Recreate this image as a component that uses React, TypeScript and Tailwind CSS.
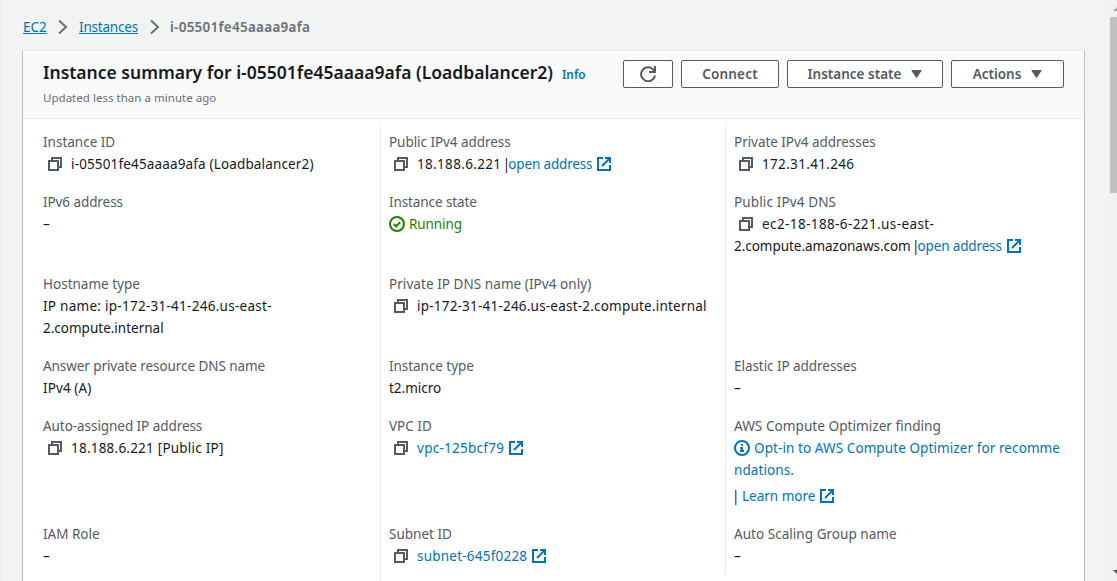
import React from "react";
import type { ReactNode } from "react";

function CopyIcon() {
  return (
    <svg className="ml-1 mr-2 inline-block size-4 shrink-0 align-[-3px]" viewBox="0 0 16 16" fill="none" stroke="#545b64" strokeWidth="2">
      <path d="M2 5h9v9H2z" />
      <path d="M5 5V2h9v9h-3" />
    </svg>
  );
}

function ExternalIcon() {
  return (
    <svg className="ml-1 inline-block size-4 align-[-3px]" viewBox="0 0 16 16" fill="none" stroke="#0073bb" strokeWidth="2">
      <path d="M7 2H2v12h12V9" />
      <path d="M9 2h5v5" />
      <path d="M6 10l8-8" />
    </svg>
  );
}

function Chevron() {
  return (
    <svg className="h-4 w-2.5" viewBox="0 0 10 16" fill="none" stroke="#687078" strokeWidth="2">
      <path d="M1 1.5L8 8l-7 6.5" />
    </svg>
  );
}

function Caret() {
  return (
    <svg className="ml-2.5 h-2 w-[11px]" viewBox="0 0 11 8" fill="#545b64" stroke="#545b64" strokeLinejoin="round">
      <path d="M.8.5h9.4L5.5 7.5z" />
    </svg>
  );
}

function Field({ label, className = "", children }: { label: ReactNode; className?: string; children: ReactNode }) {
  return (
    <div className={`pb-4 ${className}`}>
      <div className="whitespace-nowrap text-[#545b64]">{label}</div>
      <div className="whitespace-nowrap text-[#16191f]">{children}</div>
    </div>
  );
}

function Link({ children, className = "" }: { children: ReactNode; className?: string }) {
  return <a className={`text-[#0073bb] ${className}`}>{children}</a>;
}

const button = "flex h-7 items-center justify-center rounded-xs border border-[#545b64] bg-white text-[13.5px] font-semibold text-[#545b64]";
const divided = "border-l border-[#eaeded] pl-2";

export default function App() {
  return (
    <div className="flex h-[581px] w-[1117px] overflow-hidden bg-[#f2f3f3] font-['Noto_Sans',sans-serif] text-[13.5px] leading-[22px]">
      <main className="flex w-[1109px] flex-col border-l border-[#eaeded] pl-[21px]">
        <nav className="flex h-[50px] shrink-0 items-center pl-px pt-1 text-[#687078]">
          <Link className="w-6 underline">EC2</Link>
          <span className="ml-[11px] mr-[11px]"><Chevron /></span>
          <Link className="w-[59px] tracking-[-0.2px] underline">Instances</Link>
          <span className="ml-3 mr-2.5"><Chevron /></span>
          <span className="font-semibold tracking-[0.26px]">i-05501fe45aaaa9afa</span>
        </nav>
        <section className="flex w-[1063px] grow flex-col border-x border-t border-x-[#b8c1c2] border-t-[#eaeded] bg-white">
          <header className="flex h-[68px] shrink-0 justify-between border-b border-[#eaeded] bg-[#fafafa] pl-5 pr-5">
            <div className="whitespace-nowrap pt-2">
              <div className="flex items-baseline">
                <h1 className="w-[511px] text-[17.5px] font-semibold leading-[26px] text-[#16191f]">Instance summary for i-05501fe45aaaa9afa (Loadbalancer2)</h1>
                <Link className="ml-2 text-[11.8px] font-semibold">Info</Link>
              </div>
              <div className="pt-0.5 text-[11.5px] tracking-[0.03px] text-[#687078]">Updated less than a minute ago</div>
            </div>
            <div className="flex gap-2 pt-[9px]">
              <button className={`${button} w-[50px]`}>
                <svg className="size-4" viewBox="0 0 16 16" fill="none" stroke="#545b64" strokeWidth="2">
                  <path d="M15 9.5A7 7 0 1 1 13.5 3.8L15 5.5" />
                  <path d="M15 0v6H9" />
                </svg>
              </button>
              <button className={`${button} w-[98px] tracking-[0.2px]`}>Connect</button>
              <button className={`${button} w-[156px]`}>Instance state<Caret /></button>
              <button className={`${button} w-[113px]`}>Actions<Caret /></button>
            </div>
          </header>
          <div className="mt-1 grid h-[470px] shrink-0 grid-cols-[337px_345px_339px] content-start pl-5">
            <Field className="pt-2" label="Instance ID">
              <CopyIcon /><span className="tracking-[0.15px]">i-05501fe45aaaa9afa (Loadbalancer2)</span>
            </Field>
            <Field className={`pt-2 ${divided}`} label={<span className="tracking-[-0.05px]">Public IPv4 address</span>}>
              <CopyIcon /><span className="tracking-[0.33px]">18.188.6.221</span><span className="tracking-[-2px]"> |</span>
              <Link className="tracking-[-0.15px]">open address<ExternalIcon /></Link>
            </Field>
            <Field className={`pt-2 ${divided}`} label={<span className="tracking-[-0.04px]">Private IPv4 addresses</span>}>
              <CopyIcon /><span className="tracking-[0.33px]">172.31.41.246</span>
            </Field>

            <Field label={<span className="tracking-[-0.08px]">IPv6 address</span>}>–</Field>
            <Field className={divided} label={<span className="tracking-[-0.1px]">Instance state</span>}>
              <span className="tracking-[-0.1px] text-[#1d8102]">
                <svg className="mr-1 inline-block size-4 align-[-3px]" viewBox="0 0 16 16" fill="none" stroke="currentColor" strokeWidth="2">
                  <circle cx="8" cy="8" r="7" />
                  <path d="M4.8 8l2.3 2.3 4-4" />
                </svg>
                Running
              </span>
            </Field>
            <Field className={divided} label={<span className="tracking-[0.13px]">Public IPv4 DNS</span>}>
              <CopyIcon /><span className="tracking-[0.4px]">ec2-18-188-6-221.us-east-</span><br />
              <span className="tracking-[-0.04px]">2.compute.amazonaws.com</span><span className="tracking-[-2px]"> |</span>
              <Link className="tracking-[-0.15px]">open address<ExternalIcon /></Link>
            </Field>

            <Field label="Hostname type"><span className="tracking-[0.27px]">IP name: ip-172-31-41-246.us-east-</span><br />2.compute.internal</Field>
            <Field className={divided} label={<span className="tracking-[0.06px]">Private IP DNS name (IPv4 only)</span>}>
              <CopyIcon /><span className="tracking-[0.21px]">ip-172-31-41-246.us-east-2.compute.internal</span>
            </Field>
            <div className={divided} />

            <Field label={<span className="tracking-[-0.08px]">Answer private resource DNS name</span>}><span className="tracking-[0.1px]">IPv4 (A)</span></Field>
            <Field className={divided} label={<span className="tracking-[-0.05px]">Instance type</span>}>t2.micro</Field>
            <Field className={divided} label={<span className="tracking-[-0.05px]">Elastic IP addresses</span>}>–</Field>

            <Field label={<span className="tracking-[-0.06px]">Auto-assigned IP address</span>}>
              <CopyIcon /><span className="tracking-[0.22px]">18.188.6.221 [Public IP]</span>
            </Field>
            <Field className={divided} label="VPC ID">
              <CopyIcon /><Link className="tracking-[0.27px]">vpc-125bcf79<ExternalIcon /></Link>
            </Field>
            <Field className={divided} label={<span className="text-[13.65px]">AWS Compute Optimizer finding</span>}>
              <Link className="tracking-[0.09px]">
                <svg className="mr-1 inline-block size-4 align-[-3px]" viewBox="0 0 16 16" fill="none" stroke="currentColor" strokeWidth="2">
                  <circle cx="8" cy="8" r="7" />
                  <path d="M8 11V8H6M10 11H6M8 6V4" strokeWidth="1.8" />
                </svg>
                Opt-in to AWS Compute Optimizer for recomme<br />ndations.
              </Link>
              <div className="-ml-0.5 mt-1"><span className="tracking-[-0.5px]">| </span><Link>Learn more<ExternalIcon /></Link></div>
            </Field>

            <Field label="IAM Role">–</Field>
            <Field className={divided} label="Subnet ID">
              <CopyIcon /><Link className="tracking-[0.22px]">subnet-645f0228<ExternalIcon /></Link>
            </Field>
            <Field className={`self-start !pb-2 ${divided}`} label={<span className="tracking-[0.04px]">Auto Scaling Group name</span>}>–</Field>
          </div>
        </section>
      </main>
      <aside className="flex w-2 flex-col justify-between overflow-hidden bg-[#f1f1f1] pl-px">
        <svg className="h-[17px] w-[7px]" viewBox="0 0 7 17" fill="#a3a3a3"><path d="M3 11h4V7z" /></svg>
        <div className="h-44 bg-[#c1c1c1]" />
        <div className="grow" />
        <svg className="h-[17px] w-[7px]" viewBox="0 0 7 17" fill="#505050"><path d="M3 6h4v4z" /></svg>
      </aside>
    </div>
  );
}
